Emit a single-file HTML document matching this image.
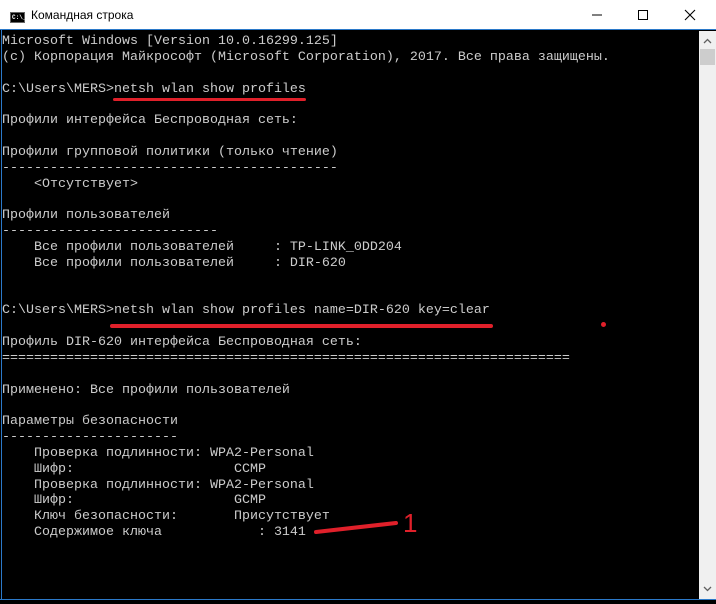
<!DOCTYPE html>
<html><head><meta charset="utf-8"><style>
html,body{margin:0;padding:0;width:716px;height:600px;overflow:hidden;background:#000}
#title{position:absolute;left:0;top:0;width:716px;height:30px;background:#fff;border-bottom:1px solid #2b79c9;box-sizing:border-box}
#title .t{position:absolute;left:31px;top:8px;font:12px "Liberation Sans","DejaVu Sans",sans-serif;color:#000}
#ico{position:absolute;left:10px;top:12px;width:15px;height:11px;background:#000;border:1px solid #666;box-sizing:border-box;color:#fff;font:bold 6px "Liberation Mono",monospace;line-height:9px;padding-left:1px}
.btn{position:absolute;top:0;width:46px;height:30px}
#con{position:absolute;left:1px;top:30px;width:698px;height:569px;background:#000;overflow:hidden;border-left:1px solid #2b79c9}
pre{margin:0;padding:0;font:13.33px "Liberation Mono","DejaVu Sans Mono",monospace;line-height:15.85px;color:#cccccc;position:absolute;left:0;top:4px}
#sb{position:absolute;left:699px;top:31px;width:17px;height:568px;background:#f0f0f0}
#thumb{position:absolute;left:700px;top:49px;width:15px;height:16px;background:#cdcdcd}
.r{position:absolute;background:#e0202a;border-radius:2px}
#bot{position:absolute;left:0;top:599px;width:716px;height:1px;background:#2b79c9}
</style></head><body>
<div id="title"><div id="ico">C:\_</div><div class="t">Командная строка</div>
<svg class="btn" style="left:574px" width="46" height="30"><line x1="18" y1="15" x2="28" y2="15" stroke="#000" stroke-width="1"/></svg>
<svg class="btn" style="left:620px" width="46" height="30"><rect x="18.5" y="10.5" width="9" height="9" fill="none" stroke="#000"/></svg>
<svg class="btn" style="left:666px" width="50" height="30"><path d="M19 10L29 20M29 10L19 20" stroke="#000" stroke-width="1.1"/></svg>
</div>
<div id="con"><pre>Microsoft Windows [Version 10.0.16299.125]
(c) Корпорация Майкрософт (Microsoft Corporation), 2017. Все права защищены.

C:\Users\MERS>netsh wlan show profiles

Профили интерфейса Беспроводная сеть:

Профили групповой политики (только чтение)
------------------------------------------
    &lt;Отсутствует&gt;

Профили пользователей
---------------------------
    Все профили пользователей     : TP-LINK_0DD204
    Все профили пользователей     : DIR-620


C:\Users\MERS>netsh wlan show profiles name=DIR-620 key=clear

Профиль DIR-620 интерфейса Беспроводная сеть:
=======================================================================

Применено: Все профили пользователей

Параметры безопасности
----------------------
    Проверка подлинности: WPA2-Personal
    Шифр:                    CCMP
    Проверка подлинности: WPA2-Personal
    Шифр:                    GCMP
    Ключ безопасности:       Присутствует
    Содержимое ключа            : 3141</pre></div>
<div id="sb"><svg width="17" height="568"><path d="M5 12L8.5 8.5L12 12" fill="none" stroke="#606060" stroke-width="1.3"/><path d="M5 556L8.5 559.5L12 556" fill="none" stroke="#606060" stroke-width="1.3"/></svg></div>
<div id="thumb"></div>
<div class="r" style="left:113px;top:98px;width:193px;height:3px"></div>
<div class="r" style="left:110px;top:324px;width:383px;height:4px"></div>
<div class="r" style="left:601px;top:322px;width:5px;height:5px;border-radius:50%"></div>
<svg style="position:absolute;left:0;top:0" width="716" height="600"><path d="M316 532L396 523" stroke="#e0202a" stroke-width="4" stroke-linecap="round"/><text x="403" y="532" font-family="Liberation Sans,sans-serif" font-size="26" fill="#e0202a">1</text></svg>
<div id="bot"></div>
</body></html>
